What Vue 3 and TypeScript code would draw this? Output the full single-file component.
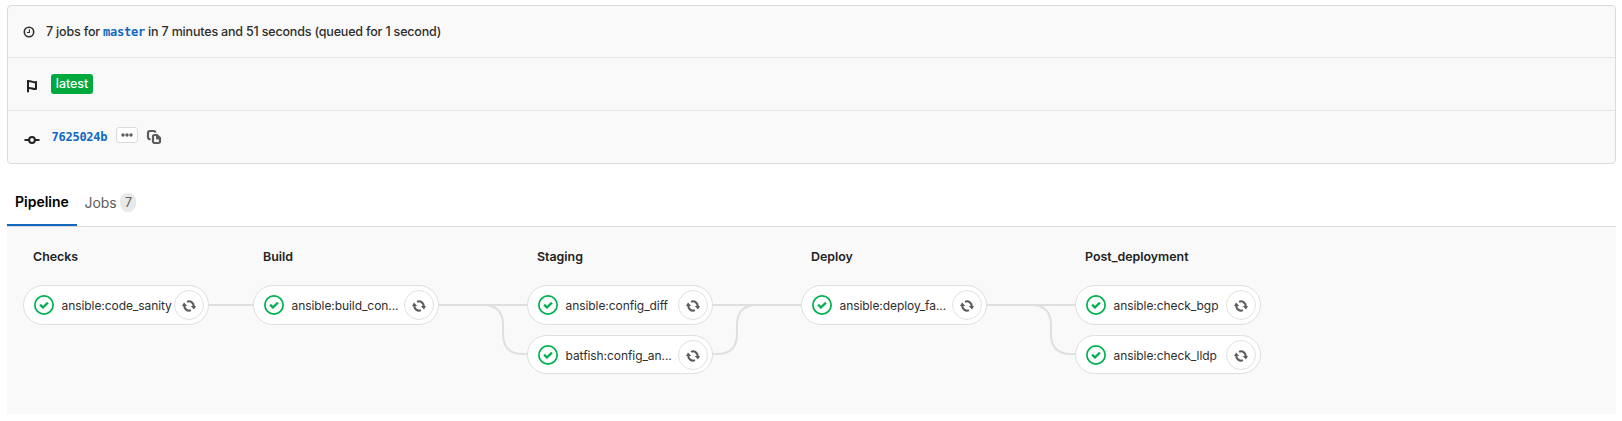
<script setup lang="ts">
interface Stage {
  title: string
  jobs: string[]
  link?: 'single' | 'split' | 'merge'
}

const stages: Stage[] = [
  { title: 'Checks', jobs: ['ansible:code_sanity'] },
  { title: 'Build', link: 'single', jobs: ['ansible:build_con...'] },
  { title: 'Staging', link: 'split', jobs: ['ansible:config_diff', 'batfish:config_an...'] },
  { title: 'Deploy', link: 'merge', jobs: ['ansible:deploy_fa...'] },
  { title: 'Post_deployment', link: 'split', jobs: ['ansible:check_bgp', 'ansible:check_lldp'] },
]

const linkPaths = {
  single: 'M0 20H44',
  split: 'M0 20H88M44 20Q64 20 64 40V49Q64 69 84 69H88',
  merge: 'M0 20H88M0 69H4Q24 69 24 49V40Q24 20 44 20',
}
</script>

<template>
  <main class="page">
    <section class="info">
      <div class="row row-jobs">
        <svg class="clock" viewBox="0 0 12 12">
          <circle cx="6" cy="6" r="4.7" />
          <path d="M6.4 3.2V6.500H3.900" />
        </svg>
        <p class="summary">7 jobs for <a class="mono branch">master</a> in 7 minutes and 51 seconds (queued for 1 second)</p>
      </div>
      <div class="row row-flag">
        <svg class="flag" viewBox="0 0 16 16">
          <path d="M5 14.300V2M5 3.200C8 2.600 9.500 4.800 13 4.200V10.800C10 11.400 8.500 9.400 5 10" />
        </svg>
        <span class="badge">latest</span>
      </div>
      <div class="row row-commit">
        <svg class="commit" viewBox="0 0 16 16">
          <path d="M0.500 8H5M11 8H15.500" />
          <circle cx="8" cy="8" r="2.9" />
        </svg>
        <a class="mono sha">7625024b</a>
        <button class="more" type="button">
          <svg viewBox="0 0 12 4"><circle cx="2" cy="2" r="1.7" /><circle cx="6" cy="2" r="1.7" /><circle cx="10" cy="2" r="1.7" /></svg>
        </button>
        <svg class="copy" viewBox="0 0 16 16">
          <path d="M4.500 10.200H4A2 2 0 0 1 2 8.200V4A2 2 0 0 1 4 2H7.500A2 2 0 0 1 9.500 3.600" />
          <path d="M8.500 6H11L14 9V12.500A1.500 1.500 0 0 1 12.500 14H8.500A1.500 1.500 0 0 1 7 12.500V7.500A1.500 1.500 0 0 1 8.500 6Z" />
          <path class="fold" d="M10 6H11.500L14 8.500V10.500H11.200A1.200 1.200 0 0 1 10 9.300Z" />
        </svg>
      </div>
    </section>

    <nav class="tabs">
      <a class="tab active">Pipeline</a>
      <a class="tab jobs-tab">Jobs<span class="count">7</span></a>
    </nav>

    <section class="graph">
      <template v-for="stage in stages" :key="stage.title">
        <svg
          v-if="stage.link"
          class="link"
          :class="{ short: stage.link === 'single' }"
          :viewBox="stage.link === 'single' ? '0 0 44 90' : '0 0 88 90'"
        >
          <path :d="linkPaths[stage.link]" />
        </svg>
        <div class="stage">
          <h2>{{ stage.title }}</h2>
          <div v-for="job in stage.jobs" :key="job" class="job">
            <svg class="ok" viewBox="0 0 14 14">
              <circle cx="7" cy="7" r="6.4" />
              <path d="M6.278 7.697L5.045 6.464a.296.296 0 0 0-.42-.002l-.613.614a.298.298 0 0 0 .002.42l1.910 1.909a.5.5 0 0 0 .703.005l.265-.265L9.997 6.040a.291.291 0 0 0-.009-.408l-.614-.614a.29.29 0 0 0-.408-.009L6.278 7.697z" />
            </svg>
            <span class="name">{{ job }}</span>
            <button class="retry" type="button">
              <svg viewBox="0 0 16 16">
                <path class="arc" d="M2.800 7A5.300 5.300 0 0 0 10.200 12.800M5.800 3.200A5.300 5.300 0 0 1 13.200 9" />
                <path class="head" d="M0 7.900L2.300 4L6 7.900ZM16 8.100L13.700 12L10 8.100Z" />
              </svg>
            </button>
          </div>
        </div>
      </template>
    </section>
  </main>
</template>

<style>
body {
  margin: 0;
  background: #fff;
}
</style>

<style scoped>
.page {
  box-sizing: border-box;
  height: 421px;
  padding: 5px 6px 0 7px;
  font-family: Inter, 'Liberation Sans', sans-serif;
  color: #2e2e2e;
}
.info {
  box-sizing: border-box;
  height: 159px;
  border: 1px solid #dbdbdb;
  border-radius: 4px;
  background: #f9f9f9;
}
.row {
  display: flex;
  align-items: center;
  box-sizing: border-box;
  height: 53px;
  padding-left: 15px;
  border-bottom: 1px solid #e5e5e5;
}
.row-jobs {
  height: 52px;
}
.row-commit {
  height: 52px;
  border-bottom: 0;
}
svg {
  display: block;
  flex: none;
  fill: none;
}
.clock {
  width: 12px;
  height: 12px;
  stroke: #2e2e2e;
  stroke-width: 1.6;
}
.clock path {
  stroke-width: 1.1;
}
.summary {
  margin: 1px 0 0 11px;
  font-size: 12.5px;
  font-weight: 450;
  letter-spacing: -0.18px;
  line-height: 20px;
  white-space: pre;
}
.mono {
  font-family: 'DejaVu Sans Mono', monospace;
  font-weight: 700;
  font-size: 12px;
  letter-spacing: -0.25px;
  color: #1068bf;
}
.flag {
  width: 16px;
  height: 16px;
  margin-top: 4px;
  stroke: #222;
  stroke-width: 2;
}
.badge {
  box-sizing: border-box;
  width: 42px;
  height: 20px;
  margin-left: 12px;
  border-radius: 3px;
  background: #00a93e;
  color: #fff;
  font-size: 12.4px;
  font-weight: 450;
  line-height: 20px;
  text-align: center;
}
.commit {
  width: 16px;
  height: 16px;
  margin: 5px 0 0 1px;
  stroke: #222;
  stroke-width: 2;
}
.sha {
  width: 56.5px;
  margin-left: 11.5px;
}
.more {
  display: flex;
  align-items: center;
  justify-content: center;
  box-sizing: border-box;
  width: 22px;
  height: 16px;
  margin: -4px 0 0 8px;
  padding: 0 0 1px;
  border: 1px solid #dbdbdb;
  border-radius: 3px;
  background: #fff;
}
.more svg {
  width: 12px;
  height: 4px;
  fill: #5c5c5c;
}
.copy {
  width: 16px;
  height: 16px;
  margin: 0 0 0 8px;
  stroke: #5c5c5c;
  stroke-width: 2.2;
}
.fold {
  fill: #5c5c5c;
  stroke: none;
}
.tabs {
  display: flex;
  box-sizing: border-box;
  height: 63px;
  padding-top: 15px;
  border-bottom: 1px solid #dbdbdb;
}
.tab {
  display: flex;
  align-items: center;
  box-sizing: border-box;
  height: 47px;
  padding: 0 8px 1px;
  font-size: 14px;
  color: #5e5e5e;
}
.active {
  width: 70px;
  padding-bottom: 0;
  border-bottom: 2px solid #1068bf;
  color: #000;
  font-weight: 600;
}
.jobs-tab {
  padding-left: 7.5px;
  letter-spacing: -0.1px;
}
.count {
  width: 16px;
  height: 19px;
  margin-left: 4px;
  border-radius: 10px;
  background: #e8e8e8;
  font-size: 12.5px;
  line-height: 19px;
  text-align: center;
}
.graph {
  display: flex;
  box-sizing: border-box;
  height: 187px;
  padding: 20px 0 0 16px;
  background: #f9f9f9;
}
.stage {
  width: 186px;
}
h2 {
  margin: 0 0 18px 10px;
  font-size: 12.4px;
  font-weight: 600;
  line-height: 20px;
  color: #222;
}
.job {
  display: flex;
  align-items: center;
  box-sizing: border-box;
  width: 186px;
  height: 40px;
  margin-bottom: 10px;
  padding: 0 4px 0 10px;
  border: 1px solid #dfdfdf;
  border-radius: 20px;
  background: #fff;
}
.job + .job {
  height: 39px;
}
.ok {
  width: 20px;
  height: 20px;
}
.ok circle {
  stroke: #00b050;
  stroke-width: 1.2;
}
.ok path {
  fill: #00b050;
  stroke: #00b050;
  stroke-width: 0.2;
}
.name {
  flex: 1;
  margin-left: 7.5px;
  padding-top: 1px;
  font-size: 12px;
  letter-spacing: -0.07px;
  line-height: 18px;
  white-space: nowrap;
}
.job + .job .name {
  padding-top: 2px;
}
.retry {
  display: flex;
  align-items: center;
  justify-content: center;
  box-sizing: border-box;
  flex: none;
  width: 30px;
  height: 30px;
  padding: 2px 0 0;
  border: 1px solid #e1e1e1;
  border-radius: 50%;
  background: #fff;
}
.retry svg {
  width: 14px;
  height: 14px;
}
.arc {
  stroke: #5c5c5c;
  stroke-width: 2.3;
}
.head {
  fill: #5c5c5c;
}
.link {
  width: 88px;
  height: 90px;
  margin-top: 38px;
}
.link.short {
  width: 44px;
}
.link path {
  stroke: #dfdfdf;
  stroke-width: 2;
}
</style>
